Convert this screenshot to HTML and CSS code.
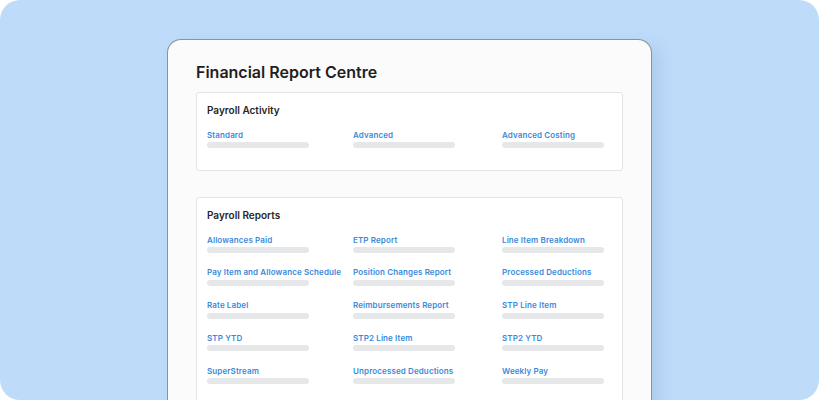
FILE: index.html
```html
<!DOCTYPE html>
<html>
<head>
<meta charset="utf-8">
<link rel="stylesheet" href="styles.css">
</head>
<body>
<div class="frame">
  <div class="card">
    <h1 class="title">Financial Report Centre</h1>
    <section class="box box-activity">
      <h2 class="box-title">Payroll Activity</h2>
      <div class="grid">
        <div class="item"><a class="link">Standard</a><div class="bar"></div></div>
        <div class="item"><a class="link">Advanced</a><div class="bar"></div></div>
        <div class="item"><a class="link">Advanced Costing</a><div class="bar"></div></div>
      </div>
    </section>
    <section class="box">
      <h2 class="box-title">Payroll Reports</h2>
      <div class="grid">
        <div class="item"><a class="link">Allowances Paid</a><div class="bar"></div></div>
        <div class="item"><a class="link">ETP Report</a><div class="bar"></div></div>
        <div class="item"><a class="link">Line Item Breakdown</a><div class="bar"></div></div>
        <div class="item"><a class="link">Pay Item and Allowance Schedule</a><div class="bar"></div></div>
        <div class="item"><a class="link">Position Changes Report</a><div class="bar"></div></div>
        <div class="item"><a class="link">Processed Deductions</a><div class="bar"></div></div>
        <div class="item"><a class="link">Rate Label</a><div class="bar"></div></div>
        <div class="item"><a class="link">Reimbursements Report</a><div class="bar"></div></div>
        <div class="item"><a class="link">STP Line Item</a><div class="bar"></div></div>
        <div class="item"><a class="link">STP YTD</a><div class="bar"></div></div>
        <div class="item"><a class="link">STP2 Line Item</a><div class="bar"></div></div>
        <div class="item"><a class="link">STP2 YTD</a><div class="bar"></div></div>
        <div class="item"><a class="link">SuperStream</a><div class="bar"></div></div>
        <div class="item"><a class="link">Unprocessed Deductions</a><div class="bar"></div></div>
        <div class="item"><a class="link">Weekly Pay</a><div class="bar"></div></div>
      </div>
    </section>
  </div>
</div>
</body>
</html>
```

FILE: styles.css
```css
html, body {
  margin: 0;
  padding: 0;
  background: #ffffff;
}
body {
  font-family: Inter, "Noto Sans", sans-serif;
}
.frame {
  width: 819px;
  height: 400px;
  box-sizing: border-box;
  background: #bedbfa;
  border-radius: 20px;
  overflow: hidden;
  padding: 39px 0 0 167px;
}
.card {
  width: 485px;
  height: 400px;
  box-sizing: border-box;
  background: #fbfbfb;
  border: 1px solid #8d929a;
  border-bottom: none;
  border-radius: 14px 14px 0 0;
  padding: 22px 28px 0 28px;
  box-shadow: 8px 6px 16px rgba(60, 90, 130, 0.12);
}
.title {
  margin: 0 0 10px 0;
  font-size: 16px;
  line-height: 20px;
  font-weight: 600;
  color: #1f1f1f;
  letter-spacing: 0;
}
.box {
  background: #ffffff;
  border: 1px solid #e2e3e5;
  border-radius: 3px;
  padding: 10px 10px 22px 10px;
  margin-bottom: 26px;
}
.box-title {
  margin: 0 0 11.5px 0;
  font-size: 10px;
  line-height: 14px;
  font-weight: 600;
  color: #262626;
  letter-spacing: 0;
}
.grid {
  display: grid;
  grid-template-columns: 146px 149px 1fr;
  row-gap: 13.25px;
}
.item {
  display: flex;
  flex-direction: column;
}
.link {
  font-size: 8px;
  line-height: 12px;
  font-weight: 600;
  color: #3a8adb;
  letter-spacing: 0.12px;
  white-space: nowrap;
}
.bar {
  margin-top: 1.5px;
  width: 102px;
  height: 6px;
  border-radius: 3px;
  background: #e6e7e9;
}
```
